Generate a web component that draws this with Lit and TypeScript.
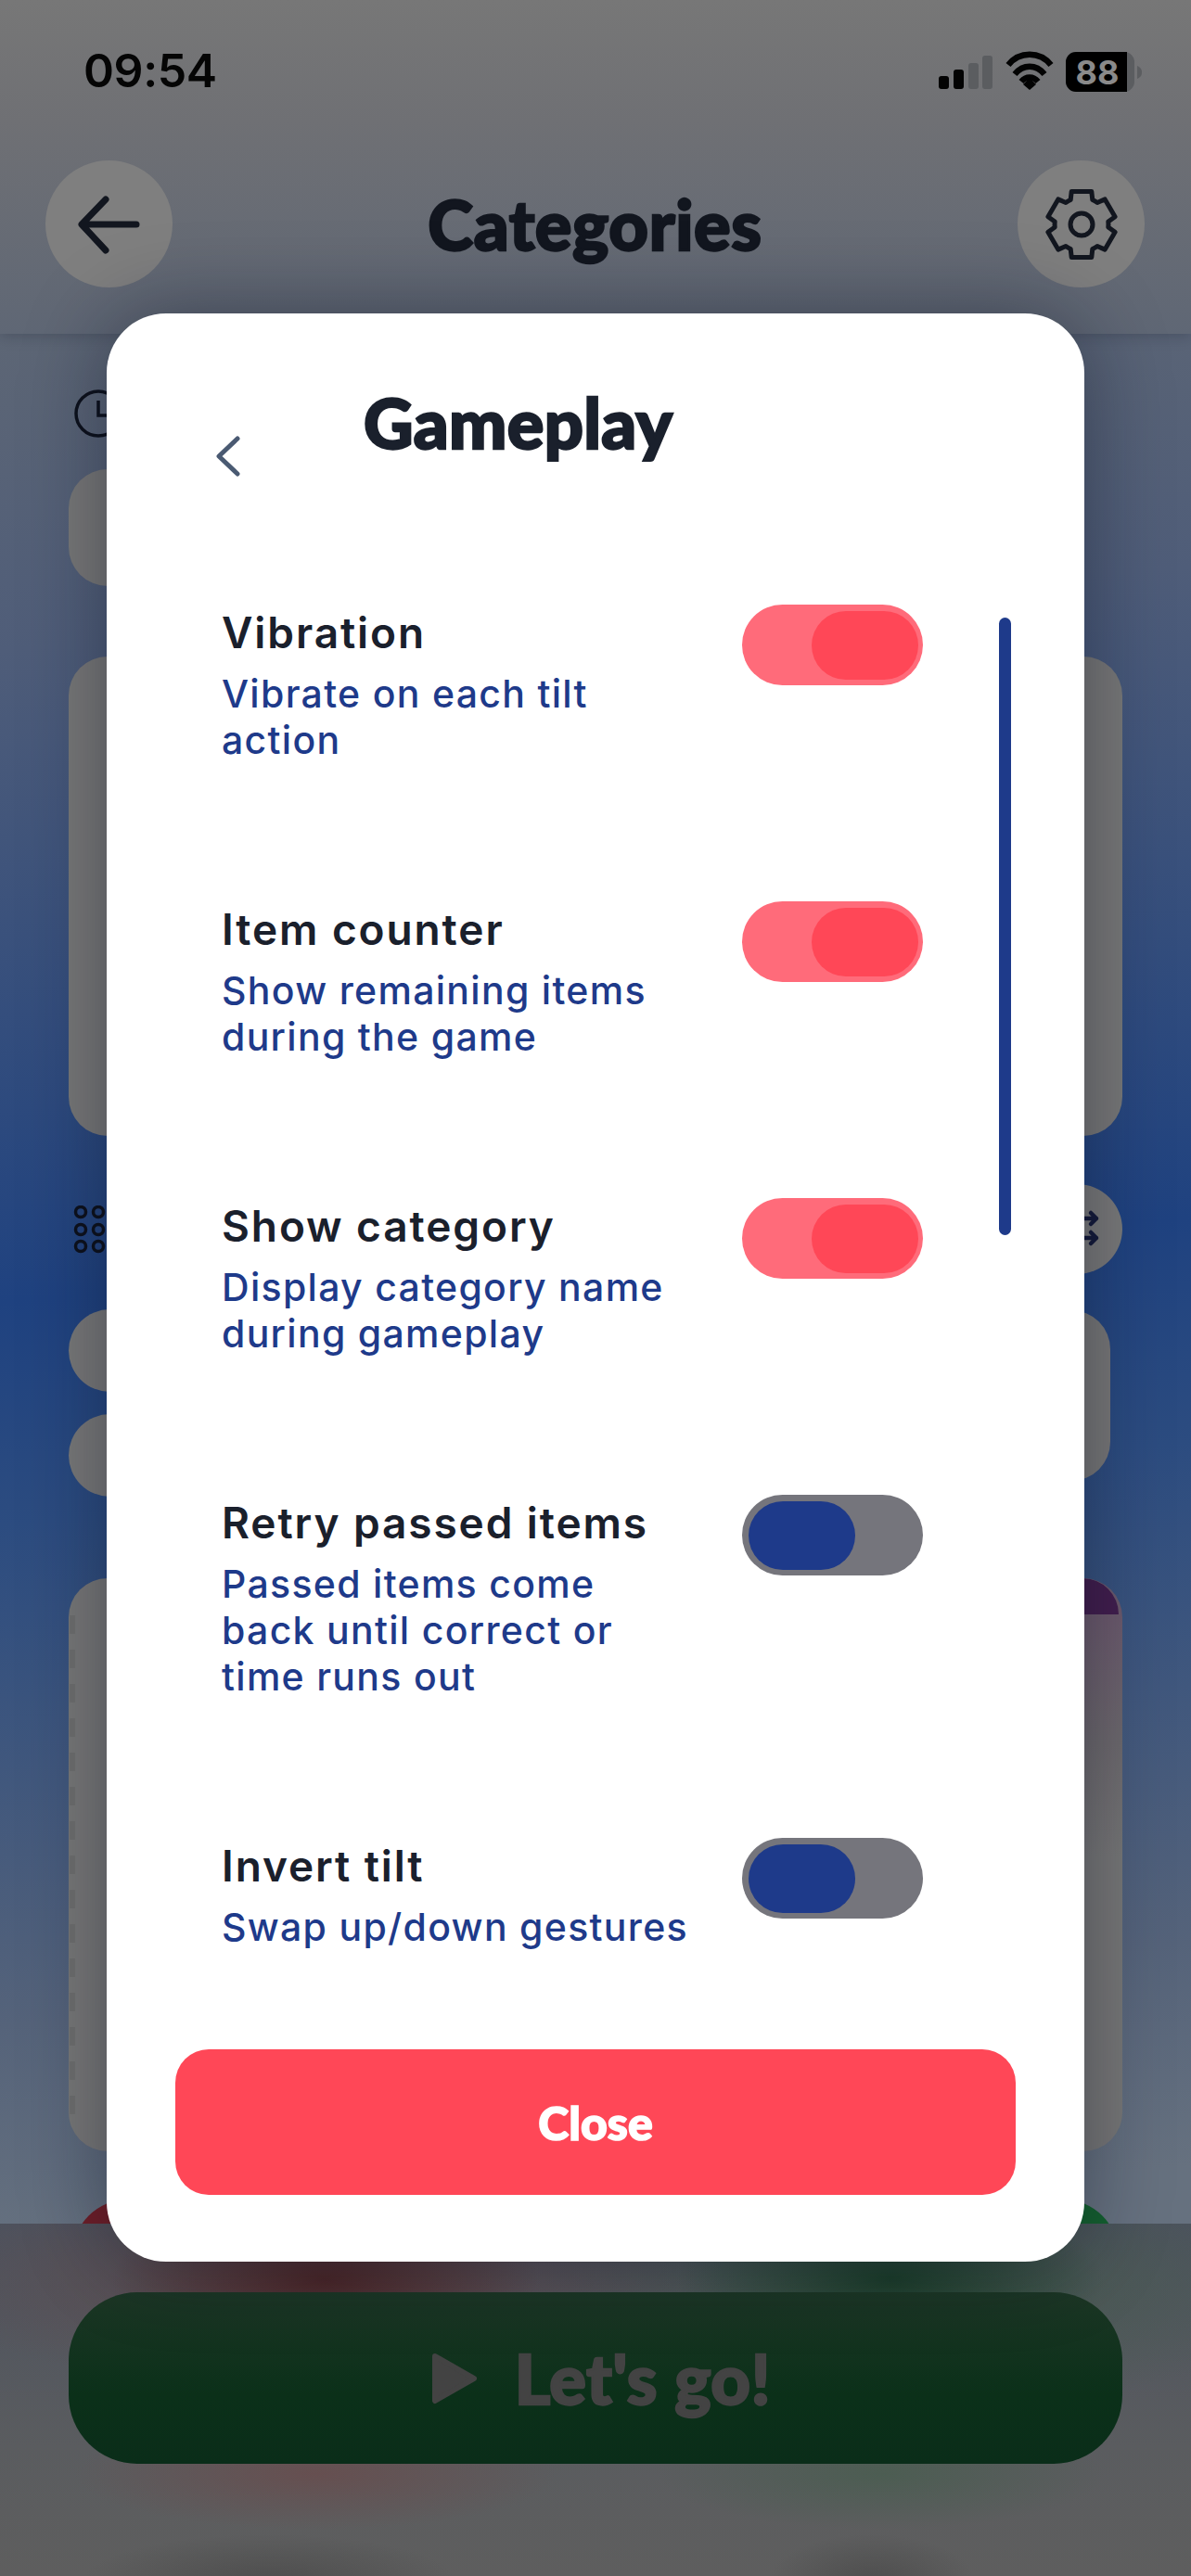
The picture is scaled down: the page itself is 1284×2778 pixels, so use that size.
import { LitElement, html, css, svg } from 'lit'
import { customElement } from 'lit/decorators.js'
import { classMap } from 'lit/directives/class-map.js'

const settings = [
  { title: 'Vibration', desc: 'Vibrate on each tilt action', on: true },
  { title: 'Item counter', desc: 'Show remaining items during the game', on: true },
  { title: 'Show category', desc: 'Display category name during gameplay', on: true },
  { title: 'Retry passed items', desc: 'Passed items come back until correct or time runs out', on: false, tall: true },
  { title: 'Invert tilt', desc: 'Swap up/down gestures', on: false }
]

// six toothed gear, flat tooth on top
function gearPath (cx: number, cy: number, outer: number, inner: number) {
  const pt = (deg: number, r: number) => {
    const a = (deg - 90) * Math.PI / 180
    return `${(cx + r * Math.cos(a)).toFixed(1)} ${(cy + r * Math.sin(a)).toFixed(1)}`
  }
  let d = ''
  for (let i = 0; i < 6; i++) {
    const a = i * 60
    d += `${i === 0 ? 'M' : 'A' + inner + ' ' + inner + ' 0 0 1'}${pt(a - 24, inner)}`
    d += `L${pt(a - 17, outer)}L${pt(a + 17, outer)}L${pt(a + 24, inner)}`
  }
  return d + `A${inner} ${inner} 0 0 1 ${pt(-24, inner)}Z`
}

@customElement('app-root')
export class AppRoot extends LitElement {
  static styles = css`
    :host {
      display: block;
      font-family: Inter, "Liberation Sans", sans-serif;
    }

    .page {
      position: relative;
      width: 1284px;
      height: 2778px;
      overflow: hidden;
      background: linear-gradient(176deg, #5d6675 360px, #4f5d79 700px, #1f4280 1400px, #2c4c80 1640px, #55637a 2180px, #66717f 2420px);
    }

    .top {
      height: 360px;
      box-sizing: border-box;
      background: linear-gradient(#777777, #6f7074 130px, #5f6775 100%);
      box-shadow: 0 2px 14px rgba(20, 25, 40, .25);
      position: relative;
    }

    .status {
      display: flex;
      align-items: flex-start;
      justify-content: space-between;
      height: 173px;
      box-sizing: border-box;
      padding: 51px 53px 0 90px;
    }

    .status svg {
      margin-top: 4px;
      overflow: visible;
    }

    .time {
      font: 600 50px Inter, sans-serif;
      letter-spacing: -.4px;
      color: #050505;
      line-height: 50px;
    }

    .nav {
      display: flex;
      align-items: center;
      justify-content: space-between;
      padding: 0 50px 0 49px;
    }

    .round {
      display: flex;
      align-items: center;
      justify-content: center;
      width: 137px;
      height: 137px;
      border-radius: 50%;
      background: #7f7f7f;
    }

    .fun {
      font-family: Lato, "Open Sans", sans-serif;
      font-weight: 900;
      -webkit-text-stroke: 2.4px currentColor;
    }

    .heading {
      font-size: 74px;
      line-height: 90px;
      color: #12161f;
      letter-spacing: .6px;
    }

    main {
      display: flex;
      flex-direction: column;
      padding: 60px 74px 0;
    }

    .clock {
      display: block;
      margin-left: 6px;
    }

    .card {
      background: #787878;
      border-radius: 42px;
    }

    .recent {
      width: 600px;
      height: 126px;
      margin-top: 34px;
    }

    .featured {
      height: 517px;
      margin-top: 76px;
    }

    .tools {
      display: flex;
      align-items: center;
      justify-content: space-between;
      margin-top: 52px;
      height: 97px;
    }

    .shuffle {
      width: 97px;
      height: 97px;
      border-radius: 50%;
      background: #7a7a7a;
      display: block;
    }

    .filters {
      display: flex;
      justify-content: space-between;
      align-items: flex-start;
      margin-top: 38px;
      height: 202px;
    }

    .pills {
      display: flex;
      flex-direction: column;
      gap: 24px;
    }

    .pill {
      width: 400px;
      height: 89px;
      border-radius: 45px;
      background: #797979;
    }

    .side {
      width: 480px;
      height: 184px;
      margin: 1px 13px 0 0;
    }

    .deck {
      position: relative;
      height: 618px;
      margin-top: 88px;
      overflow: hidden;
      background:
        repeating-linear-gradient(to bottom, #6f6f6f 0 20px, transparent 20px 37px) 1px 40px / 6px 540px no-repeat,
        linear-gradient(#6c5a6d 40px, #6e6a6e 180px, #777777 300px) right top / 200px 100% no-repeat,
        #787878;
    }

    .deck-head {
      height: 39px;
      margin: 0 4px 0 800px;
      background: #421e4e;
      border-radius: 0 42px 0 0;
    }

    .modes {
      display: flex;
      gap: 44px;
      margin: 52px 4px 0;
    }

    .mode {
      flex: 1;
      height: 200px;
      border-radius: 60px 60px 0 0;
    }

    .red {
      background: #6e1e28;
    }

    .green {
      background: #14602f;
    }

    footer {
      position: absolute;
      left: 0;
      right: 0;
      bottom: 0;
      height: 380px;
      box-sizing: border-box;
      padding: 74px 74px 0;
      background:
        radial-gradient(ellipse 230px 90px at 350px 60px, #4a2628, rgba(74, 38, 40, 0)),
        radial-gradient(ellipse 440px 120px at 340px 60px, rgba(96, 74, 76, .9), rgba(96, 74, 76, 0)),
        radial-gradient(ellipse 230px 90px at 960px 60px, #1b3d2a, rgba(27, 61, 42, 0)),
        radial-gradient(ellipse 420px 130px at 990px 70px, rgba(70, 92, 78, .9), rgba(70, 92, 78, 0)),
        radial-gradient(ellipse 260px 60px at 340px 270px, #664f50, rgba(102, 79, 80, 0)),
        radial-gradient(ellipse 240px 60px at 950px 270px, #4c5d52, rgba(76, 93, 82, 0)),
        radial-gradient(ellipse 200px 50px at 290px 385px, #4e4e4e, rgba(78, 78, 78, 0)),
        radial-gradient(ellipse 110px 50px at 940px 385px, #4e4e4e, rgba(78, 78, 78, 0)),
        linear-gradient(#4c525e, #5a5c5f 240px, #5e5e5e);
    }

    .go {
      display: flex;
      align-items: center;
      justify-content: center;
      gap: 40px;
      height: 185px;
      box-sizing: border-box;
      padding-left: 12px;
      border-radius: 74px;
      background: linear-gradient(#1c3625, #0b3019 60%, #0a2d19);
    }

    .go span {
      font-size: 74px;
      color: #434343;
      letter-spacing: .5px;
    }

    .modal {
      position: absolute;
      left: 115px;
      top: 338px;
      width: 1054px;
      height: 2101px;
      box-sizing: border-box;
      display: flex;
      flex-direction: column;
      padding: 0 74px 72px;
      background: #ffffff;
      border-radius: 64px;
      box-shadow: 0 0 90px rgba(10, 15, 30, .42);
    }

    .modal-head {
      display: flex;
      flex: none;
      align-items: flex-end;
      gap: 133px;
      height: 176px;
      padding-left: 44px;
    }

    .chevron {
      display: block;
      margin-bottom: 0;
    }

    .modal-title {
      font-size: 74px;
      line-height: 80px;
      color: #1a202c;
      letter-spacing: .3px;
      margin-bottom: 18px;
    }

    .list {
      position: relative;
      flex: 1;
      min-height: 0;
      margin-top: 138px;
    }

    .row {
      display: flex;
      justify-content: space-between;
      height: 320px;
      padding-left: 50px;
      box-sizing: border-box;
    }

    .row.tall {
      height: 370px;
    }

    .copy {
      width: 510px;
    }

    .name {
      font-size: 46px;
      font-weight: 600;
      line-height: 60px;
      color: #1a202c;
      letter-spacing: 1.9px;
    }

    .desc {
      margin-top: 11px;
      font-size: 41px;
      font-weight: 500;
      line-height: 50px;
      color: #1e3a8a;
      letter-spacing: 1.3px;
    }

    .toggle {
      display: flex;
      align-items: center;
      box-sizing: border-box;
      width: 195px;
      height: 87px;
      margin-right: 100px;
      padding: 0 7px;
      border-radius: 44px;
      background: #75757c;
    }

    .toggle i {
      display: block;
      width: 115px;
      height: 74px;
      border-radius: 37px;
      background: #1e3a8a;
    }

    .toggle.on {
      justify-content: flex-end;
      padding-right: 5px;
      background: #ff6b7a;
    }

    .toggle.on i {
      background: #ff4757;
    }

    .thumb {
      position: absolute;
      left: 888px;
      top: 14px;
      width: 13px;
      height: 666px;
      border-radius: 7px;
      background: #1e3a8a;
    }

    .close {
      display: flex;
      flex: none;
      align-items: center;
      justify-content: center;
      height: 157px;
      border-radius: 36px;
      background: #ff4757;
      color: #ffffff;
      font-size: 50px;
      -webkit-text-stroke-width: 1.6px;
    }
  `

  renderRow (row: typeof settings[number]) {
    return html`
      <div class=${classMap({ row: true, tall: !!row.tall })}>
        <div class="copy">
          <div class="name">${row.title}</div>
          <div class="desc">${row.desc}</div>
        </div>
        <div class=${classMap({ toggle: true, on: row.on })}><i></i></div>
      </div>
    `
  }

  renderDots () {
    const dots = []
    for (const cy of [7, 26, 44]) {
      for (const cx of [13, 32]) {
        dots.push(svg`<circle cx=${cx} cy=${cy} r="5.5" fill="none" stroke="#0d111c" stroke-width="3.5"/>`)
      }
    }
    return html`<svg width="48" height="52" viewBox="0 0 48 52">${dots}</svg>`
  }

  render () {
    return html`
      <div class="page">
        <div class="top">
          <div class="status">
            <div class="time">09:54</div>
            <svg width="222" height="44" viewBox="0 0 222 44">
              <rect x="3" y="27" width="11" height="14" rx="3" fill="#030303"/>
              <rect x="19" y="20" width="11" height="21" rx="3" fill="#030303"/>
              <rect x="35" y="13" width="11" height="28" rx="3" fill="#5b5d60"/>
              <rect x="50" y="5" width="11" height="36" rx="3" fill="#5b5d60"/>
              <path d="M78 15C90 0 112 0 124 15M85 25C94 14 108 14 117 25M92 33C97 27 105 27 110 33" fill="none" stroke="#030303" stroke-width="6.5"/>
              <path d="M94 36L101 29L108 36L101 42Z" fill="#030303"/>
              <rect x="140" y="1" width="74" height="43" rx="11" fill="#5b5d60"/>
              <path d="M151 1H206V44H151A11 11 0 0 1 140 33V12A11 11 0 0 1 151 1Z" fill="#000"/>
              <text x="174" y="36" text-anchor="middle" font-family="Inter, sans-serif" font-size="36" font-weight="700" fill="#8a8a8a">88</text>
              <path d="M217 16C221 18 222 20 222 23C222 26 221 28 217 30Z" fill="#5b5d60"/>
            </svg>
          </div>
          <div class="nav">
            <div class="round">
              <svg width="70" height="64" viewBox="0 0 70 64" fill="none" stroke="#12161f" stroke-width="7" stroke-linecap="round" stroke-linejoin="round">
                <path d="M64 32H6M31 5L5 32L31 60"/>
              </svg>
            </div>
            <div class="fun heading">Categories</div>
            <div class="round">
              <svg width="84" height="84" viewBox="0 0 84 84" fill="none" stroke="#12161f" stroke-width="5" stroke-linejoin="round">
                <path d=${gearPath(42, 42, 37, 29)}/>
                <circle cx="42" cy="42" r="12"/>
              </svg>
            </div>
          </div>
        </div>

        <main>
          <svg class="clock" width="52" height="52" viewBox="0 0 52 52" fill="none" stroke="#0d111c" stroke-width="3.5">
            <circle cx="26" cy="26" r="24"/>
            <path d="M26 12V28H38"/>
          </svg>
          <div class="card recent"></div>
          <div class="card featured"></div>
          <div class="tools">
            ${this.renderDots()}
            <svg class="shuffle" viewBox="0 0 97 97" fill="none" stroke="#141a3a" stroke-width="4.5" stroke-linecap="round" stroke-linejoin="round">
              <path d="M18 58H28L48 37H69M63 31L69 37L63 43M18 37H28L48 58H69M63 52L69 58L63 64"/>
            </svg>
          </div>
          <div class="filters">
            <div class="pills">
              <div class="pill"></div>
              <div class="pill"></div>
            </div>
            <div class="card side"></div>
          </div>
          <div class="card deck">
            <div class="deck-head"></div>
          </div>
          <div class="modes">
            <div class="mode red"></div>
            <div class="mode green"></div>
          </div>
        </main>

        <footer>
          <div class="go">
            <svg width="50" height="56" viewBox="0 0 50 56">
              <path d="M4 4L46 28L4 52Z" fill="#434343" stroke="#434343" stroke-width="6" stroke-linejoin="round"/>
            </svg>
            <span class="fun">Let's go!</span>
          </div>
        </footer>

        <section class="modal">
          <div class="modal-head">
            <svg class="chevron" width="26" height="44" viewBox="0 0 26 44" fill="none" stroke="#4a5a72" stroke-width="5" stroke-linecap="round" stroke-linejoin="round">
              <path d="M23 3L3 22L23 41"/>
            </svg>
            <div class="fun modal-title">Gameplay</div>
          </div>
          <div class="list">
            ${settings.map(row => this.renderRow(row))}
            <div class="thumb"></div>
          </div>
          <div class="fun close">Close</div>
        </section>
      </div>
    `
  }
}
